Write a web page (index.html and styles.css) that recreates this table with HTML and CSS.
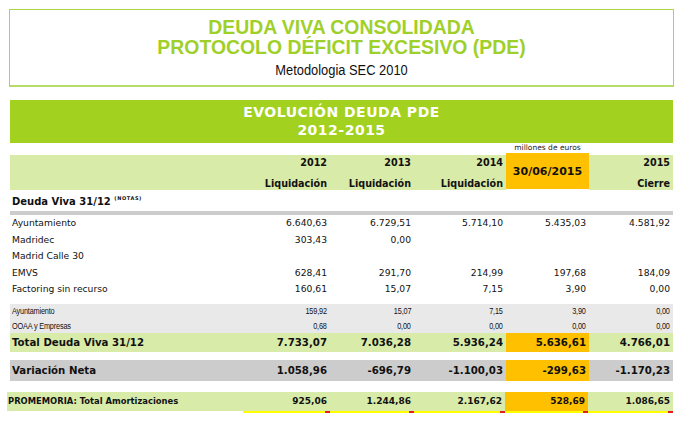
FILE: index.html
```html
<!DOCTYPE html>
<html lang="es">
<head>
<meta charset="utf-8">
<title>Deuda Viva Consolidada</title>
<link rel="stylesheet" href="styles.css">
</head>
<body>
<div class="page">
  <div class="titlebox">
    <div class="t1">DEUDA VIVA CONSOLIDADA</div>
    <div class="t1">PROTOCOLO DÉFICIT EXCESIVO (PDE)</div>
    <div class="sub">Metodologia SEC 2010</div>
  </div>

  <div class="bar">
    <div>EVOLUCIÓN DEUDA PDE</div>
    <div>2012-2015</div>
  </div>

  <table class="grid">
    <colgroup>
      <col class="c-label"><col class="c-2012"><col class="c-2013"><col class="c-2014"><col class="c-jun"><col class="c-2015">
    </colgroup>
    <tr class="r-units">
      <td></td><td></td><td></td><td></td><td class="units">millones de euros</td><td></td>
    </tr>
    <tr class="r-head">
      <td class="hd"></td>
      <td class="hd"><div>2012</div><div>Liquidación</div></td>
      <td class="hd"><div>2013</div><div>Liquidación</div></td>
      <td class="hd"><div>2014</div><div>Liquidación</div></td>
      <td class="hd-jun">30/06/2015</td>
      <td class="hd"><div>2015</div><div>Cierre</div></td>
    </tr>
    <tr class="r-section">
      <td colspan="6">Deuda Viva 31/12 <sup>(NOTAS)</sup></td>
    </tr>
    <tr class="r-rule"><td colspan="6"></td></tr>
    <tr class="r-data">
      <td>Ayuntamiento</td><td>6.640,63</td><td>6.729,51</td><td>5.714,10</td><td>5.435,03</td><td>4.581,92</td>
    </tr>
    <tr class="r-data">
      <td>Madridec</td><td>303,43</td><td>0,00</td><td></td><td></td><td></td>
    </tr>
    <tr class="r-data">
      <td>Madrid Calle 30</td><td></td><td></td><td></td><td></td><td></td>
    </tr>
    <tr class="r-data">
      <td>EMVS</td><td>628,41</td><td>291,70</td><td>214,99</td><td>197,68</td><td>184,09</td>
    </tr>
    <tr class="r-data r-last">
      <td>Factoring sin recurso</td><td>160,61</td><td>15,07</td><td>7,15</td><td>3,90</td><td>0,00</td>
    </tr>
    <tr class="r-small">
      <td><span class="n">Ayuntamiento</span></td><td><span class="n">159,92</span></td><td><span class="n">15,07</span></td><td><span class="n">7,15</span></td><td><span class="n">3,90</span></td><td><span class="n">0,00</span></td>
    </tr>
    <tr class="r-small">
      <td><span class="n">OOAA y Empresas</span></td><td><span class="n">0,68</span></td><td><span class="n">0,00</span></td><td><span class="n">0,00</span></td><td><span class="n">0,00</span></td><td><span class="n">0,00</span></td>
    </tr>
    <tr class="r-total">
      <td>Total Deuda Viva 31/12</td><td>7.733,07</td><td>7.036,28</td><td>5.936,24</td><td class="jun">5.636,61</td><td>4.766,01</td>
    </tr>
    <tr class="r-gap1"><td colspan="6"></td></tr>
    <tr class="r-var">
      <td>Variación Neta</td><td>1.058,96</td><td>-696,79</td><td>-1.100,03</td><td class="jun">-299,63</td><td>-1.170,23</td>
    </tr>
  </table>

  <table class="memo">
    <colgroup>
      <col class="m-label"><col class="c-2012"><col class="c-2013"><col class="m-2014"><col class="m-jun"><col class="m-2015">
    </colgroup>
    <tr>
      <td class="ml">PROMEMORIA: Total Amortizaciones</td>
      <td class="mv">925,06</td>
      <td class="mv">1.244,86</td>
      <td class="mv">2.167,62</td>
      <td class="mv jun">528,69</td>
      <td class="mv">1.086,65</td>
    </tr>
  </table>
</div>
</body>
</html>
```

FILE: styles.css
```css
html, body {
  margin: 0;
  padding: 0;
  background: #ffffff;
}
body {
  width: 686px;
  height: 424px;
  overflow: hidden;
  font-family: "DejaVu Sans", Verdana, sans-serif;
  color: #111111;
}
.page {
  padding-top: 9px;
}

/* title box */
.titlebox {
  box-sizing: border-box;
  margin-left: 9px;
  width: 665px;
  height: 78px;
  border: 1px solid #aad647;
  border-bottom: 2px solid #b7dc66;
  text-align: center;
  padding-top: 7px;
}
.t1 {
  font-family: "Liberation Sans", Arial, sans-serif;
  font-weight: bold;
  font-size: 20px;
  line-height: 20px;
  color: #9fd02a;
  transform: scaleX(0.97);
}
.sub {
  margin-top: 5px;
  font-family: "Liberation Sans", Arial, sans-serif;
  font-size: 14px;
  line-height: 16px;
  color: #111111;
  transform: scaleX(0.92);
}

/* green band */
.bar {
  margin: 13px 0 0 10px;
  width: 663px;
  height: 43px;
  box-sizing: border-box;
  padding-top: 3px;
  background: #a2d11f;
  color: #ffffff;
  text-align: center;
  font-weight: bold;
  font-size: 14px;
  line-height: 18px;
  letter-spacing: 0.5px;
}

/* main table */
table {
  border-collapse: separate;
  border-spacing: 0;
  table-layout: fixed;
}
.grid {
  margin-left: 10px;
  width: 663px;
}
.c-label { width: 233px; }
.c-2012 { width: 87px; }
.c-2013 { width: 84px; }
.c-2014 { width: 92px; }
.c-jun { width: 83px; }
.c-2015 { width: 84px; }

td {
  padding: 0 3px 0 0;
  text-align: right;
  white-space: nowrap;
  overflow: visible;
}
td:first-child {
  text-align: left;
  padding-left: 2px;
}

.r-units td { height: 10px; }
.units {
  text-align: center;
  font-size: 7.5px;
  line-height: 10px;
  vertical-align: bottom;
  padding: 0;
  color: #222;
}

.r-head td { height: 32px; }
.hd {
  background: #d8eba8;
  border-top: 2px solid #ffffff;
  font-weight: bold;
  font-size: 9.6px;
  line-height: 10px;
  vertical-align: top;
  padding-top: 3px;
}
.hd div + div { margin-top: 11px; }
.r-head td.hd-jun {
  background: #ffc000;
  border-bottom: 1px solid #ffffff;
  text-align: center;
  font-weight: bold;
  font-size: 11px;
  padding: 0;
  height: 36px;
}

.r-section td {
  height: 21px;
  font-weight: bold;
  font-size: 10px;
  vertical-align: middle;
}
.r-section sup {
  font-size: 5px;
  letter-spacing: 0.6px;
  vertical-align: 5px;
}
.r-rule td {
  height: 4px;
  padding: 0;
  background: #cccccc;
}

.r-data td {
  height: 16.5px;
  font-size: 9.2px;
  line-height: 16.5px;
}
.r-data.r-last td {
  height: 23px;
  vertical-align: top;
}

.r-small td {
  height: 14.5px;
  background: #e9e9e9;
  font-family: "Liberation Sans", Arial, sans-serif;
  font-size: 8.5px;
  letter-spacing: -0.2px;
  line-height: 14.5px;
}
.n {
  display: inline-block;
  transform: scaleX(0.86);
  transform-origin: right center;
}
.r-small td:first-child .n {
  transform-origin: left center;
}

.r-total td {
  height: 19px;
  background: #d8eba8;
  font-weight: bold;
  font-size: 10.2px;
}
.r-gap1 td { height: 8px; padding: 0; }

.r-var td {
  height: 21px;
  background: #cccccc;
  font-weight: bold;
  font-size: 10.2px;
}

td.jun { background: #ffc000; }

/* promemoria */
.memo {
  margin-left: 7px;
  margin-top: 11px;
  width: 666px;
}
.m-label { width: 236px; }
.m-2014 { width: 91px; }
.m-jun { width: 83px; }
.m-2015 { width: 85px; }
.memo td {
  height: 17px;
  padding-bottom: 4px;
  font-weight: bold;
  font-size: 9px;
  line-height: 12px;
  vertical-align: middle;
  background:
    linear-gradient(#ffffff, #ffffff) left bottom / 100% 2px no-repeat,
    #d8eba8;
}
.memo td.ml {
  padding-left: 1px;
  font-size: 8.4px;
}
.memo td.mv {
  background:
    linear-gradient(#e02020, #e02020) right bottom / 5px 2px no-repeat,
    linear-gradient(#ffff00, #ffff00) left bottom / 100% 2px no-repeat,
    #d8eba8;
}
.memo td.mv.jun {
  background:
    linear-gradient(#e02020, #e02020) right bottom / 5px 2px no-repeat,
    linear-gradient(#ffff00, #ffff00) left bottom / 100% 2px no-repeat,
    #ffc000;
}
```
